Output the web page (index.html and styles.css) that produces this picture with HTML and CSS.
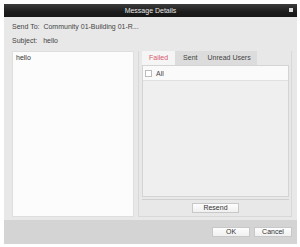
FILE: index.html
```html
<!DOCTYPE html>
<html lang="en">
<head>
    <meta charset="UTF-8">
    <title>Message Details</title>
    <link rel="stylesheet" href="styles.css">
</head>
<body>
    <div class="dialog">
        <div class="titlebar">
            <span class="title">Message Details</span>
            <span class="close"></span>
        </div>
        <div class="content">
            <div class="field">Send To:&nbsp; Community 01-Building 01-R...</div>
            <div class="field subject">Subject:&nbsp;&nbsp; hello</div>
            <div class="main">
                <div class="message">hello</div>
                <div class="panel">
                    <div class="tabs">
                        <div class="tab active">Failed</div>
                        <div class="tab">Sent</div>
                        <div class="tab">Unread Users</div>
                    </div>
                    <div class="list">
                        <div class="list-head">
                            <span class="check"></span>
                            <span>All</span>
                        </div>
                    </div>
                    <div class="panel-foot">
                        <button class="btn resend">Resend</button>
                    </div>
                </div>
            </div>
        </div>
        <div class="footer">
            <button class="btn">OK</button>
            <button class="btn">Cancel</button>
        </div>
    </div>
</body>
</html>
```

FILE: styles.css
```css
body {
    margin: 0;
    background: #fff;
    font-family: "Liberation Sans", Arial, sans-serif;
    font-size: 7px;
    color: #444;
}

.dialog {
    margin: 4px 3px 3px 4px;
    width: 293px;
    height: 240px;
    display: flex;
    flex-direction: column;
    background: #e8e8e8;
}

.titlebar {
    height: 13px;
    flex: none;
    display: flex;
    align-items: center;
    justify-content: center;
    position: relative;
    background: linear-gradient(#3c3c3c, #1c1c1c 60%, #161616);
    color: #e8e8e8;
}

.close {
    position: absolute;
    right: 4px;
    top: 4px;
    width: 4px;
    height: 4px;
    background: #ddd;
}

.content {
    flex: 1;
    padding: 6px 5px 3px 8px;
    display: flex;
    flex-direction: column;
}

.field {
    height: 8px;
    line-height: 8px;
}

.subject {
    margin-top: 6px;
}

.main {
    margin-top: 6px;
    flex: 1;
    display: flex;
    gap: 4px;
}

.message {
    width: 114px;
    flex: none;
    background: #fcfcfc;
    border: 1px solid #dedede;
    padding: 2px 3px;
    line-height: 8px;
    color: #333;
}

.panel {
    flex: 1;
    display: flex;
    flex-direction: column;
    border: 1px solid #d8d8d8;
    border-top: none;
    padding: 0 2px 0 3px;
}

.tabs {
    display: flex;
    height: 14px;
    align-self: flex-start;
    background: #dcdcdc;
    white-space: nowrap;
    padding-right: 1px;
}

.tab {
    padding: 0 5px;
    line-height: 14px;
    color: #444;
}

.tab.active {
    background: #f5f5f5;
    color: #d9556a;
    padding: 0 7px;
    margin-right: 3px;
}

.list {
    flex: 1;
    background: #efefef;
    border: 1px solid #d4d4d4;
}

.list-head {
    height: 14px;
    display: flex;
    align-items: center;
    gap: 4px;
    background: #fafafa;
    border-bottom: 1px solid #e0e0e0;
    padding-left: 2px;
}

.check {
    width: 5px;
    height: 5px;
    border: 1px solid #bbb;
    background: #fff;
}

.panel-foot {
    height: 16px;
    display: flex;
    align-items: center;
    justify-content: center;
    border-top: 1px solid #d0d0d0;
    margin-top: 2px;
}

.btn {
    font-family: "Liberation Sans", Arial, sans-serif;
    font-size: 7px;
    color: #333;
    background: linear-gradient(#fdfdfd, #f0f0f0);
    border: 1px solid #c8c8c8;
    height: 10px;
    padding: 0;
    line-height: 8px;
}

.resend {
    width: 47px;
}

.footer {
    height: 24px;
    flex: none;
    background: #d4d4d4;
    display: flex;
    align-items: center;
    justify-content: flex-end;
    gap: 4px;
    padding-right: 5px;
}

.footer .btn {
    width: 38px;
}
```
